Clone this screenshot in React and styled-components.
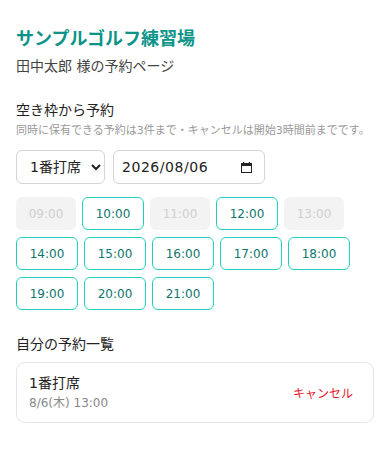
import styled, { createGlobalStyle } from "styled-components";

const GlobalStyle = createGlobalStyle`
  body {
    margin: 0;
    background: #ffffff;
    font-family: "DejaVu Sans", "Noto Sans CJK JP", sans-serif;
    color: #222222;
  }
`;

const slots = [
  { time: "09:00", open: false },
  { time: "10:00", open: true },
  { time: "11:00", open: false },
  { time: "12:00", open: true },
  { time: "13:00", open: false },
  { time: "14:00", open: true },
  { time: "15:00", open: true },
  { time: "16:00", open: true },
  { time: "17:00", open: true },
  { time: "18:00", open: true },
  { time: "19:00", open: true },
  { time: "20:00", open: true },
  { time: "21:00", open: true },
];

const CalendarIcon = () => (
  <svg width="11" height="11" viewBox="0 0 11 11" aria-hidden="true">
    <rect x="0.5" y="1.5" width="10" height="9" fill="none" stroke="#222" />
    <rect x="0" y="1" width="11" height="3" fill="#222" />
    <rect x="2" y="0" width="1.2" height="2" fill="#222" />
    <rect x="7.8" y="0" width="1.2" height="2" fill="#222" />
  </svg>
);

const App = () => {
  return (
    <>
      <GlobalStyle />
      <Page lang="ja">
        <Title>サンプルゴルフ練習場</Title>
        <Subtitle>田中太郎 様の予約ページ</Subtitle>

        <SectionHeading $top={23}>空き枠から予約</SectionHeading>
        <Note>同時に保有できる予約は3件まで・キャンセルは開始3時間前までです。</Note>

        <Controls>
          <Select defaultValue="1">
            <option value="1">1番打席</option>
            <option value="2">2番打席</option>
            <option value="3">3番打席</option>
          </Select>
          <DateField>
            <DateText>2026/08/06</DateText>
            <CalendarIcon />
          </DateField>
        </Controls>

        <SlotGrid>
          {slots.map((s) => (
            <SlotButton key={s.time} disabled={!s.open} $open={s.open}>
              {s.time}
            </SlotButton>
          ))}
        </SlotGrid>

        <SectionHeading $top={24}>自分の予約一覧</SectionHeading>
        <ReservationCard>
          <div>
            <SeatName>1番打席</SeatName>
            <ReservedAt>8/6(木) 13:00</ReservedAt>
          </div>
          <CancelButton>キャンセル</CancelButton>
        </ReservationCard>
      </Page>
    </>
  );
};

const Page = styled.main`
  padding: 25px 16px 24px;
`;

const Title = styled.h1`
  margin: 0;
  font-size: 18px;
  line-height: 27px;
  font-weight: 700;
  color: #0d9488;
`;

const Subtitle = styled.p`
  margin: 4px 0 0;
  font-size: 14px;
  line-height: 21px;
  color: #444444;
`;

const SectionHeading = styled.h2`
  margin: ${(p) => p.$top}px 0 0;
  font-size: 14px;
  line-height: 21px;
  font-weight: 400;
  color: #222222;
`;

const Note = styled.p`
  margin: 2px 0 0;
  font-size: 11px;
  line-height: 16px;
  color: #999999;
  white-space: nowrap;
`;

const Controls = styled.div`
  display: flex;
  gap: 8px;
  margin-top: 11px;
`;

const fieldStyles = `
  box-sizing: border-box;
  height: 34px;
  border: 1px solid #d4d4d4;
  border-radius: 6px;
  background: #ffffff;
  font-family: "DejaVu Sans", "Noto Sans CJK JP", sans-serif;
  font-size: 14px;
  color: #222222;
`;

const Select = styled.select`
  ${fieldStyles}
  width: 89px;
  padding: 0 4px 0 9px;
`;

const DateField = styled.div`
  ${fieldStyles}
  width: 152px;
  padding: 0 12px 0 8px;
  display: flex;
  align-items: center;
  justify-content: space-between;
`;

const DateText = styled.span`
  letter-spacing: 0.55px;
`;

const SlotGrid = styled.div`
  display: flex;
  flex-wrap: wrap;
  gap: 7px 6px;
  margin-top: 13px;
`;

const SlotButton = styled.button`
  box-sizing: content-box;
  width: 60px;
  height: ${(p) => (p.$open ? 31 : 33)}px;
  padding: 0;
  border: ${(p) => (p.$open ? "1px solid #22d3bb" : "none")};
  border-radius: 6px;
  background: ${(p) => (p.$open ? "#ffffff" : "#f3f3f3")};
  color: ${(p) => (p.$open ? "#0f766e" : "#cfcfcf")};
  font-family: "DejaVu Sans", sans-serif;
  font-size: 12px;
  cursor: ${(p) => (p.$open ? "pointer" : "default")};
`;

const ReservationCard = styled.div`
  display: flex;
  align-items: center;
  justify-content: space-between;
  margin-top: 7px;
  padding: 10px 12px;
  border: 1px solid #e5e5e5;
  border-radius: 9px;
`;

const SeatName = styled.div`
  font-size: 14px;
  line-height: 21px;
  color: #222222;
`;

const ReservedAt = styled.div`
  font-size: 12px;
  line-height: 18px;
  color: #888888;
`;

const CancelButton = styled.button`
  padding: 6px 8px;
  border: none;
  background: transparent;
  color: #e5192a;
  font-family: "DejaVu Sans", "Noto Sans CJK JP", sans-serif;
  font-size: 12px;
  cursor: pointer;
`;

export default App;
